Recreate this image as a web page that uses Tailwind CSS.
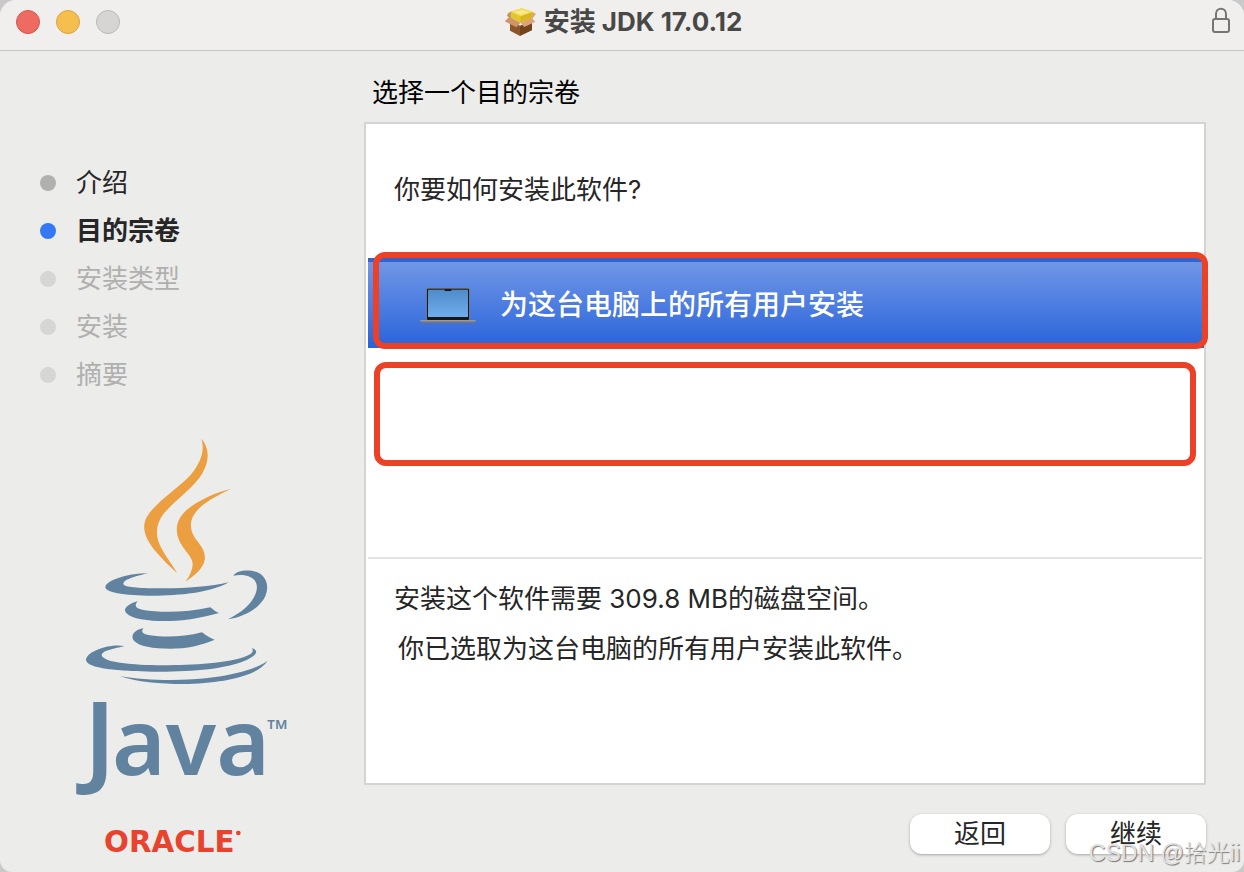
<!DOCTYPE html>
<html lang="zh-CN">
<head>
<meta charset="utf-8">
<meta name="viewport" content="width=device-width, initial-scale=1">
<title>安装 JDK 17.0.12</title>
<script src="https://cdn.jsdelivr.net/npm/@tailwindcss/browser@4"></script>
</head>
<body class="bg-[#c9c9c9] font-['Inter','Noto_Sans_CJK_SC',sans-serif] text-[#262626]">
<div class="relative flex min-h-screen flex-col overflow-hidden rounded-t-2xl rounded-b-xl bg-[#ececeb]">
  <header class="grid h-[51px] grid-cols-[1fr_auto_1fr] items-center border-b border-[#c4c4c3] bg-[#f0efee] pr-[14px] pb-[6px] pl-4">
    <div class="flex gap-4">
      <button type="button" aria-label="关闭" class="size-6 rounded-full border border-[#d9534b] bg-[#ed6b60]"></button>
      <button type="button" aria-label="最小化" class="size-6 rounded-full border border-[#dba23c] bg-[#f5bf4f]"></button>
      <button type="button" aria-label="缩放" disabled class="size-6 rounded-full border border-[#b9b9b8] bg-[#d6d5d4]"></button>
    </div>
    <h1 class="flex items-center gap-2 text-[26px] leading-8 font-bold text-[#484847]">
      <svg class="h-[30px] w-8" viewBox="0 0 96 90" aria-hidden="true">
        <path d="M18 40 48 56V87L18 71Z" fill="#8c5628"/>
        <path d="M48 56 84 42V70L48 87Z" fill="#74431d"/>
        <path d="M12 19 24 12 22 38 9 26Z" fill="#c98f5e"/>
        <path d="M84 14 96 20 85 35 76 34Z" fill="#dba777"/>
        <path d="M20 14 53 4 87 15 83 34 49 47 20 32Z" fill="#e3c52f"/>
        <path d="M20 14 53 4 87 15 50 28Z" fill="#f3de5a"/>
        <path d="M31 15 54 9 75 16 50 23Z" fill="#f8e98a"/>
        <path d="M50 28 87 15 83 34 49 47Z" fill="#d9b522"/>
        <path d="M16 30 49 47 37 61 2 43Z" fill="#cf9465"/>
        <path d="M49 47 83 33 94 44 61 60Z" fill="#dca476"/>
      </svg>
      <span>安装 JDK 17.0.12</span>
    </h1>
    <svg class="mb-1 h-[26px] w-[18px] justify-self-end" viewBox="0 0 18 26" fill="none" stroke="#757574" stroke-width="2" aria-hidden="true">
      <rect x="1" y="12" width="16" height="13" rx="2"/>
      <path d="M4 12V7C4 0 14 0 14 7V12"/>
    </svg>
  </header>

  <div class="flex flex-1">
    <aside class="flex w-[364px] shrink-0 flex-col pt-[108px]">
      <ol class="pl-10 text-[26px] leading-[48px] text-[#b0b0af]">
        <li class="flex items-center gap-5 text-[#262626]"><span class="size-4 rounded-full bg-[#b0b0af]"></span>介绍</li>
        <li class="flex items-center gap-5 font-bold text-[#262626]" aria-current="step"><span class="size-4 rounded-full bg-[#3478f6]"></span>目的宗卷</li>
        <li class="flex items-center gap-5"><span class="size-4 rounded-full bg-[#d6d6d5]"></span>安装类型</li>
        <li class="flex items-center gap-5"><span class="size-4 rounded-full bg-[#d6d6d5]"></span>安装</li>
        <li class="flex items-center gap-5"><span class="size-4 rounded-full bg-[#d6d6d5]"></span>摘要</li>
      </ol>
      <svg class="mt-[31px] ml-[70px] h-[442px] w-60" viewBox="0 0 720 1326" role="img" aria-label="Java Oracle">
        <g fill="#ec9f40">
          <path d="M394 26C404 56 396 88 372 122C338 168 260 210 230 262C212 295 228 330 262 370C280 392 302 412 321 429C308 404 288 382 272 350C254 315 258 280 282 250C312 214 368 176 396 132C420 92 418 52 394 26Z"/>
          <path d="M485 176C430 188 358 222 332 260C312 292 320 324 338 350C356 376 374 388 366 416C362 432 354 444 346 455C372 438 398 418 404 390C410 354 378 338 366 306C354 266 372 226 485 176Z"/>
        </g>
        <g fill="#61839f">
          <path d="M234 429C180 430 112 448 106 470C104 490 180 497 262 497C350 496 430 484 476 457C420 470 340 476 262 475C210 474 160 472 160 461C162 446 204 438 234 429Z"/>
          <path d="M490 437C500 420 542 416 568 430C594 446 598 478 582 506C562 538 520 562 474 568C514 548 552 520 560 480C566 444 532 430 490 437Z"/>
          <path d="M203 514C174 522 158 536 168 548C186 568 240 574 300 573C350 572 400 562 447 549C438 546 430 540 421 532C350 548 270 548 220 540C196 536 192 526 203 514Z"/>
          <path d="M220 594C192 600 182 616 190 630C206 650 250 656 300 656C350 656 395 646 434 629C420 624 408 616 396 607C340 622 280 622 240 616C218 612 212 606 220 594Z"/>
          <path d="M163 648C120 640 54 662 48 688C44 716 150 724 250 725C360 726 470 718 530 690C560 676 568 662 546 654C554 668 540 674 520 682C460 702 350 706 260 706C170 704 100 696 95 676C96 660 136 656 163 648Z"/>
          <path d="M148 738C200 756 270 762 340 762C450 760 560 742 593 692C560 716 500 732 430 742C340 754 230 752 148 738Z"/>
          <text x="42" y="1035" font-family="Noto Sans, Open Sans, sans-serif" font-weight="600" font-size="306">J</text>
          <text x="126" y="1035" font-family="Noto Sans, Open Sans, sans-serif" font-weight="600" font-size="276">ava</text>
          <text x="592" y="896" font-family="Noto Sans, Open Sans, sans-serif" font-weight="600" font-size="40">TM</text>
        </g>
        <text x="102" y="1266" fill="#e8432d" font-family="DejaVu Sans, sans-serif" font-weight="700" font-size="88">ORACLE</text>
        <circle cx="505" cy="1209" r="7" fill="#e8432d"/>
      </svg>
    </aside>

    <main class="flex min-w-0 flex-1 flex-col pr-[38px] pb-[18px]">
      <h2 class="pt-[22px] pb-[9px] pl-2 text-[26px] leading-10 text-black">选择一个目的宗卷</h2>
      <section class="flex flex-1 flex-col border-2 border-[#d4d4d4] bg-white">
        <p class="px-7 pt-[46px] text-[26px] leading-10">你要如何安装此软件?</p>
        <div class="relative mt-12 ml-[2px]">
          <button type="button" class="flex h-[90px] w-full items-center gap-6 border-t-4 border-[#3463cb] bg-linear-to-b from-[#7096e6] to-[#2862da] pl-[52px] text-left text-[28px] font-medium text-white">
            <svg class="h-[38px] w-14" viewBox="0 0 168 114" aria-hidden="true">
              <defs><linearGradient id="screen" x1="0" y1="0" x2="0" y2="1"><stop offset="0" stop-color="#4f8bc9"/><stop offset="1" stop-color="#70adec"/></linearGradient></defs>
              <rect x="19" y="6" width="130" height="100" rx="5" fill="#777"/>
              <rect x="21" y="8" width="126" height="94" rx="3" fill="#171717"/>
              <rect x="24" y="11" width="120" height="82" fill="url(#screen)"/>
              <path d="M74 10H94V15H74Z" fill="#111"/>
              <path d="M1 103H167V107Q164 111 158 111H10Q4 111 1 107Z" fill="#77777b"/>
              <path d="M1 103H167V106H1Z" fill="#a5a5a8"/>
            </svg>
            <span>为这台电脑上的所有用户安装</span>
          </button>
          <div class="pointer-events-none absolute -top-[6px] -right-1 left-[5px] h-[97px] rounded-xl border-6 border-[#ec4126]"></div>
          <div class="pointer-events-none absolute top-[104px] right-2 left-[6px] h-[104px] rounded-xl border-6 border-[#ec4126]"></div>
        </div>
        <div class="mx-[2px] mt-[209px] border-t-2 border-[#e3e3e3] px-[26px] pt-5 pb-8 text-[26px] leading-10">
          <p>安装这个软件需要 309.8 MB的磁盘空间。</p>
          <p class="mt-[10px] pl-1">你已选取为这台电脑的所有用户安装此软件。</p>
        </div>
      </section>
      <div class="mt-[29px] flex justify-end gap-4 text-[26px] leading-10">
        <button type="button" class="h-10 w-[140px] rounded-xl bg-white shadow-[0_1px_3px_rgba(0,0,0,0.3)]">返回</button>
        <button type="button" class="h-10 w-[140px] rounded-xl bg-white shadow-[0_1px_3px_rgba(0,0,0,0.3)]">继续</button>
      </div>
    </main>
  </div>
  <span class="pointer-events-none absolute right-1 bottom-[3px] font-['Liberation_Sans','Noto_Sans_CJK_SC',sans-serif] text-[23px] leading-8 font-light text-[#e2e2e2] [text-shadow:1px_1px_1px_#777]">CSDN @拾光ii</span>
</div>
</body>
</html>
